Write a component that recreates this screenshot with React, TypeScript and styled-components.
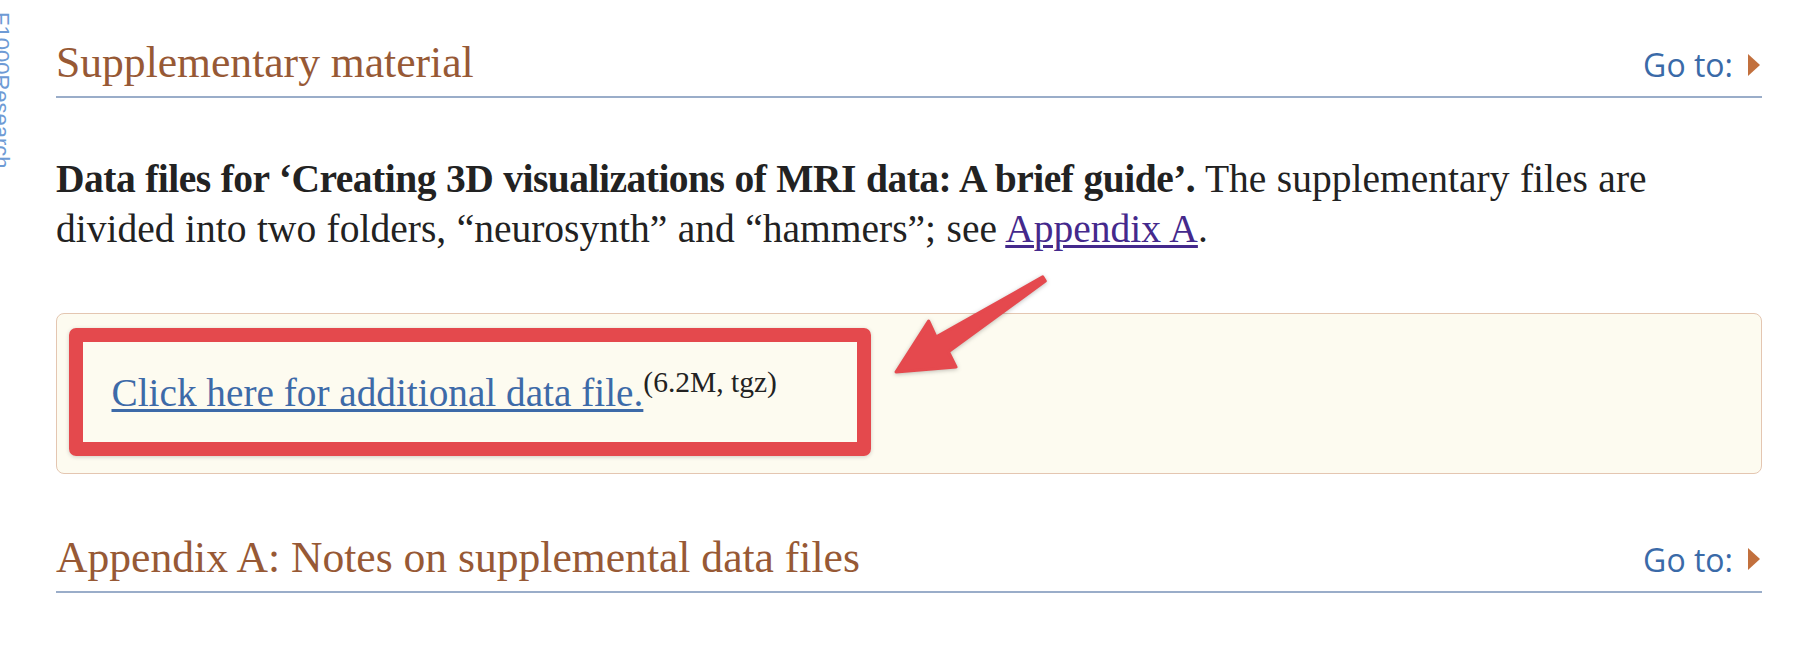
import React from "react";
import styled, { createGlobalStyle } from "styled-components";

const GlobalStyle = createGlobalStyle`
  html, body {
    margin: 0;
    padding: 0;
    background: #ffffff;
  }
  body {
    font-family: "Liberation Serif", "Times New Roman", serif;
    color: #222222;
    overflow: hidden;
  }
`;

const Page = styled.div`
  position: relative;
  width: 1706px;
  height: 616px;
  padding: 36px 48px 0 56px;
  box-sizing: content-box;
`;

const SideTab = styled.a`
  position: absolute;
  left: -10px;
  top: 12px;
  writing-mode: vertical-rl;
  font-family: "Liberation Sans", Arial, sans-serif;
  font-size: 22px;
  line-height: 22px;
  color: #6e9bd5;
  text-decoration: none;
  white-space: nowrap;
`;

const SectionHeader = styled.div<{ $gap?: number }>`
  display: flex;
  justify-content: space-between;
  align-items: baseline;
  margin-top: ${(p) => p.$gap ?? 0}px;
  padding-bottom: 8px;
  border-bottom: 2px solid #9aadc9;
`;

const Heading = styled.h2`
  margin: 0;
  font-family: "Liberation Serif", "Times New Roman", serif;
  font-weight: 400;
  font-size: 43.6px;
  line-height: 52px;
  color: #975935;
`;

const GoTo = styled.a`
  display: flex;
  align-items: center;
  gap: 15px;
  margin-right: 2px;
  font-family: "Open Sans", "Liberation Sans", sans-serif;
  font-size: 32px;
  color: #3a6aa8;
  text-decoration: none;
`;

const Caret = styled.span`
  display: block;
  width: 0;
  height: 0;
  border-left: 12px solid #c2703d;
  border-top: 11px solid transparent;
  border-bottom: 11px solid transparent;
`;

const Para = styled.p`
  margin: 56px 40px 0 0;
  font-size: 39.5px;
  line-height: 50px;
  word-spacing: 0.6px;
  color: #222222;
`;

const Strong = styled.strong`
  font-weight: 700;
  letter-spacing: -0.5px;
`;

const InlineLink = styled.a`
  color: #44298c;
  text-decoration: underline;
  text-decoration-thickness: 3px;
  text-underline-offset: 3px;
`;

const DataBox = styled.div`
  margin-top: 59px;
  border: 1.5px solid #e4c6b1;
  border-radius: 8px;
  background: #fdfbf0;
  padding: 13.5px 0 17.5px 11.5px;
`;

const Highlight = styled.div`
  box-sizing: border-box;
  width: 802px;
  height: 128px;
  border: 14px solid #e4494d;
  border-radius: 7px;
  padding: 15px 0 0 29px;
  box-shadow: 0 1px 4px rgba(0, 0, 0, 0.18);
  font-size: 39.25px;
  line-height: 50px;
  white-space: nowrap;
`;

const FileLink = styled.a`
  color: #3d6aa8;
  text-decoration: underline;
  text-decoration-thickness: 3px;
  text-underline-offset: 3px;
`;

const SizeNote = styled.span`
  font-size: 29.5px;
  vertical-align: 14px;
  color: #222222;
`;

const ArrowSvg = styled.svg`
  position: absolute;
  left: 880px;
  top: 270px;
  width: 180px;
  height: 120px;
  overflow: visible;
  filter: drop-shadow(0 1px 2px rgba(0, 0, 0, 0.25));
`;

function Arrow() {
  return (
    <ArrowSvg viewBox="0 0 180 120">
      <polygon
        points="16,102 48.6,51 56,67 162.7,6.9 165.3,11.1 68.4,81.7 76,97"
        fill="#e5494e"
        stroke="#e5494e"
        strokeWidth={3}
        strokeLinejoin="round"
      />
    </ArrowSvg>
  );
}

function SectionTitle({ title, gap }: { title: string; gap?: number }) {
  return (
    <SectionHeader $gap={gap}>
      <Heading>{title}</Heading>
      <GoTo href="#">
        Go to:
        <Caret />
      </GoTo>
    </SectionHeader>
  );
}

export default function App() {
  return (
    <>
      <GlobalStyle />
      <Page>
        <SideTab href="#">F1000Research</SideTab>
        <SectionTitle title="Supplementary material" />
        <Para>
          <Strong>Data files for ‘Creating 3D visualizations of MRI data: A brief guide’.</Strong>{" "}
          The supplementary files are divided into two folders, “neurosynth” and “hammers”; see{" "}
          <InlineLink href="#">Appendix A</InlineLink>.
        </Para>
        <DataBox>
          <Highlight>
            <FileLink href="#">Click here for additional data file.</FileLink>
            <SizeNote>(6.2M, tgz)</SizeNote>
          </Highlight>
        </DataBox>
        <SectionTitle title="Appendix A: Notes on supplemental data files" gap={56.5} />
        <Arrow />
      </Page>
    </>
  );
}
